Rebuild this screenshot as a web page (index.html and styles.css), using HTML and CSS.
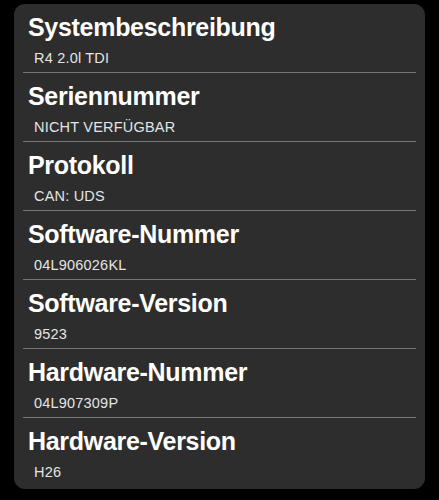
FILE: index.html
```html
<!DOCTYPE html>
<html lang="de">
<head>
<meta charset="utf-8">
<link rel="stylesheet" href="styles.css">
</head>
<body>
<div class="card">
  <div class="row"><div class="title">Systembeschreibung</div><div class="value">R4 2.0l TDI</div></div>
  <div class="row"><div class="title">Seriennummer</div><div class="value">NICHT VERFÜGBAR</div></div>
  <div class="row"><div class="title">Protokoll</div><div class="value">CAN: UDS</div></div>
  <div class="row"><div class="title">Software-Nummer</div><div class="value">04L906026KL</div></div>
  <div class="row"><div class="title">Software-Version</div><div class="value">9523</div></div>
  <div class="row"><div class="title">Hardware-Nummer</div><div class="value">04L907309P</div></div>
  <div class="row"><div class="title">Hardware-Version</div><div class="value">H26</div></div>
</div>
</body>
</html>
```
FILE: styles.css
```css
html, body {
  margin: 0;
  padding: 0;
  background: #000;
}
body {
  padding: 4px 14px 0 14px;
  font-family: "Liberation Sans", Arial, sans-serif;
}
.card {
  background: #2d2d2d;
  border-radius: 11px;
  padding: 0 9px 3px 9px;
}
.row {
  padding: 8px 0 5px 0;
  border-bottom: 1px solid #777;
}
.row:last-child {
  border-bottom: none;
}
.title {
  font-size: 25px;
  line-height: 30px;
  font-weight: bold;
  color: #fff;
  letter-spacing: -0.3px;
  padding-left: 5px;
}
.value {
  margin-top: 8px;
  font-size: 14.5px;
  line-height: 17px;
  color: #e4e4e4;
  letter-spacing: 0.2px;
  padding-left: 11px;
}
```
